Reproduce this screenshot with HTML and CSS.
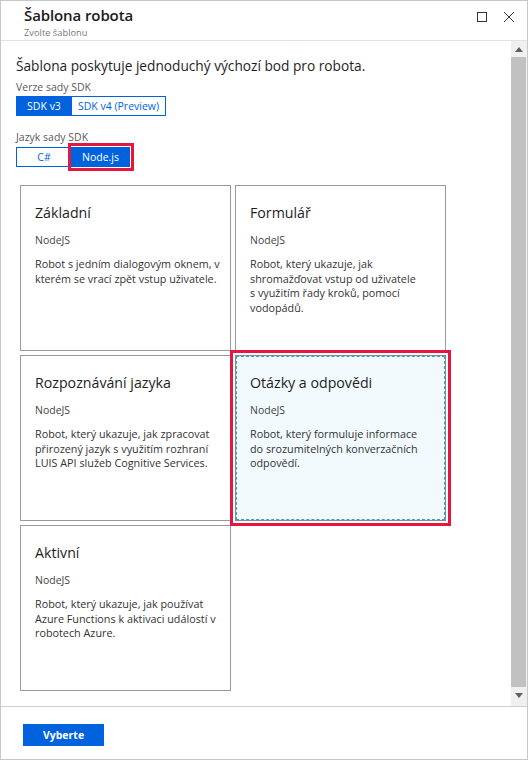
FILE: index.html
```html
<!DOCTYPE html>
<html lang="cs">
<head>
<meta charset="utf-8">
<title>Šablona robota</title>
<link rel="stylesheet" href="styles.css">
</head>
<body>
<div class="window">
  <header class="header">
    <div class="titles">
      <h1 class="title">Šablona robota</h1>
      <div class="subtitle">Zvolte šablonu</div>
    </div>
    <div class="win-actions">
      <svg class="win-icon" width="12" height="12" viewBox="0 0 12 12"><rect x="1.5" y="1.5" width="9" height="9" fill="none" stroke="#333" stroke-width="1"/></svg>
      <svg class="win-icon" width="12" height="12" viewBox="0 0 12 12"><path d="M1 1 L11 11 M11 1 L1 11" stroke="#333" stroke-width="1" fill="none"/></svg>
    </div>
  </header>
  <div class="body">
    <main class="content">
      <p class="intro">Šablona poskytuje jednoduchý výchozí bod pro robota.</p>
      <div class="label">Verze sady SDK</div>
      <div class="toggle">
        <button class="tbtn active w56">SDK v3</button>
        <button class="tbtn w94">SDK v4 (Preview)</button>
      </div>
      <div class="label label-lang">Jazyk sady SDK</div>
      <div class="toggle">
        <button class="tbtn w56">C#</button>
        <button class="tbtn active highlight w58">Node.js</button>
      </div>
      <div class="cards">
        <div class="card">
          <div class="card-title">Základní</div>
          <div class="card-lang">NodeJS</div>
          <div class="card-desc">Robot s jedním dialogovým oknem, v<br>kterém se vrací zpět vstup uživatele.</div>
        </div>
        <div class="card">
          <div class="card-title">Formulář</div>
          <div class="card-lang">NodeJS</div>
          <div class="card-desc">Robot, který ukazuje, jak<br>shromažďovat vstup od uživatele<br>s využitím řady kroků, pomocí<br>vodopádů.</div>
        </div>
        <div class="card">
          <div class="card-title">Rozpoznávání jazyka</div>
          <div class="card-lang">NodeJS</div>
          <div class="card-desc">Robot, který ukazuje, jak zpracovat<br>přirozený jazyk s využitím rozhraní<br>LUIS API služeb Cognitive Services.</div>
        </div>
        <div class="card selected">
          <div class="card-title">Otázky a odpovědi</div>
          <div class="card-lang">NodeJS</div>
          <div class="card-desc">Robot, který formuluje informace<br>do srozumitelných konverzačních<br>odpovědí.</div>
        </div>
        <div class="card">
          <div class="card-title">Aktivní</div>
          <div class="card-lang">NodeJS</div>
          <div class="card-desc">Robot, který ukazuje, jak používat<br>Azure Functions k aktivaci událostí v<br>robotech Azure.</div>
        </div>
      </div>
    </main>
    <div class="scrollbar">
      <div class="sb-arrow"><svg width="8" height="5" viewBox="0 0 8 5"><path d="M0 5 L4 0 L8 5 Z" fill="#606060"/></svg></div>
      <div class="sb-thumb"></div>
      <div class="sb-arrow"><svg width="8" height="5" viewBox="0 0 8 5"><path d="M0 0 L8 0 L4 5 Z" fill="#606060"/></svg></div>
    </div>
  </div>
  <footer class="footer">
    <button class="primary">Vyberte</button>
  </footer>
</div>
</body>
</html>
```
FILE: styles.css
```css
* { box-sizing: border-box; }
html, body { margin: 0; padding: 0; background: #fff; }
body {
  font-family: "Open Sans", "Noto Sans", "Liberation Sans", sans-serif;
  color: #1e1e1e;
}
.window {
  width: 528px;
  height: 760px;
  border: 1px solid #c8c8c8;
  display: flex;
  flex-direction: column;
  overflow: hidden;
}
.header {
  height: 40px;
  flex: none;
  border-bottom: 1px solid #e2e2e2;
  display: flex;
  justify-content: space-between;
  padding: 4px 12px 0 23px;
}
.title {
  margin: 0;
  font-size: 15px;
  font-weight: 600;
  line-height: 21px;
  color: #1a1a1a;
  letter-spacing: -0.1px;
}
.subtitle {
  margin-top: 1px;
  font-size: 9.3px;
  line-height: 12px;
  color: #7a7a7a;
}
.win-actions {
  display: flex;
  gap: 15px;
  padding-top: 6px;
}
.win-icon { display: block; }
.body {
  flex: 1;
  display: flex;
  min-height: 0;
}
.content {
  flex: 1;
  overflow: hidden;
  padding: 15px 0 0 15px;
}
.intro {
  margin: 0;
  font-size: 13.7px;
  line-height: 20px;
  color: #1e1e1e;
}
.label {
  margin-top: 4px;
  font-size: 10.5px;
  line-height: 14px;
  color: #5a5a5a;
}
.label-lang { margin-top: 14px; }
.toggle {
  display: flex;
  margin-top: 2px;
}
.label-lang + .toggle { margin-top: 3px; }
.tbtn {
  font-family: inherit;
  font-size: 10.5px;
  height: 20px;
  padding: 0;
  margin: 0;
  border: 1px solid #0063dd;
  background: #fff;
  color: #0063dd;
  line-height: 18px;
}
.tbtn.w56 { width: 56px; }
.tbtn.w58 { width: 58px; }
.tbtn.w94 { width: 94px; }
.tbtn.active { background: #0063dd; color: #fff; }
.tbtn + .tbtn { border-left: none; }
.tbtn.highlight {
  outline: 3px solid #e5173f;
  outline-offset: 1px;
}
.cards {
  margin: 18px 0 0 4px;
  display: grid;
  grid-template-columns: 211px 211px;
  grid-auto-rows: 166px;
  gap: 4px;
}
.card {
  border: 1px solid #9a9a9a;
  padding: 17px 2px 0 14px;
  background: #fff;
}
.card.selected {
  position: relative;
  background: #f2fafd;
  border-color: #8a8a8a;
  outline: 3px solid #e5173f;
  outline-offset: 2px;
}
.card.selected::after {
  content: "";
  position: absolute;
  inset: 0;
  border: 1px dashed #27a5df;
  pointer-events: none;
}
.card-title {
  font-size: 14.2px;
  line-height: 20px;
  color: #1e1e1e;
}
.card-lang {
  margin-top: 10px;
  font-size: 10.5px;
  line-height: 14px;
  color: #444;
}
.card-desc {
  margin-top: 10px;
  font-size: 10.8px;
  line-height: 14.5px;
  color: #333;
  white-space: nowrap;
}
.scrollbar {
  width: 16px;
  flex: none;
  background: #f0f0f0;
  display: flex;
  flex-direction: column;
  padding-bottom: 3px;
}
.sb-arrow {
  height: 16px;
  display: flex;
  align-items: center;
  justify-content: center;
  flex: none;
}
.sb-thumb {
  flex: 1;
  background: #c1c1c1;
  margin: 0 1px 0 0;
}
.footer {
  height: 53px;
  flex: none;
  border-top: 1px solid #cfcfcf;
  padding: 15px 0 0 22px;
}
.primary {
  font-family: inherit;
  width: 81px;
  height: 22px;
  border: none;
  background: #0063dd;
  color: #fff;
  font-size: 10.5px;
  font-weight: 700;
  padding: 0;
}
```
